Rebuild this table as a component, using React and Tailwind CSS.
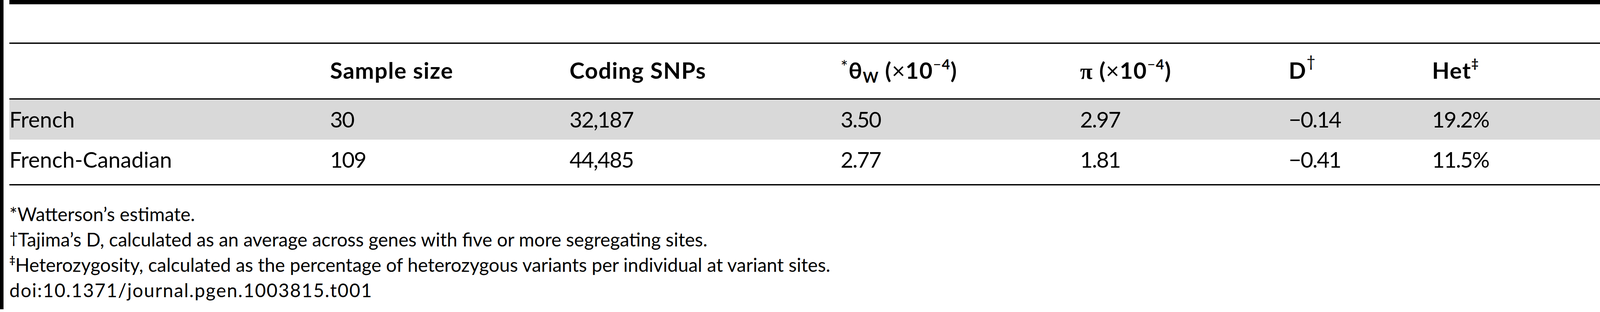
import React from 'react';

const cols = 'grid grid-cols-[821px_613px_694px_613px_534px_367px_1fr]';

const filas = [
  { pop: 'French', n: '30', snps: '32,187', theta: '3.50', pi: '2.97', d: '\u22120.14', het: '19.2%', gris: true },
  { pop: 'French-Canadian', n: '109', snps: '44,485', theta: '2.77', pi: '1.81', d: '\u22120.41', het: '11.5%', gris: false }
];

const Regla = () => (
  <div>
    <div className="h-[3px] bg-black" />
    <div className="h-px bg-[#8a8a8a]" />
  </div>
);

const App = () => {
  return (
    <div className="w-[4113px] h-[800px] bg-white flex text-black font-['Lato',sans-serif] overflow-hidden">
      <div className="w-[9px] h-[793px] bg-black shrink-0" />
      <div className="ml-[15px] flex-1 flex flex-col">
        <div className="h-[11px] bg-black" />
        <div className="h-[98px]" />
        <Regla />

        {/* cabecera */}
        <div className={`${cols} h-[139px] pt-[32px] text-[58px] leading-[70px] font-bold tracking-[1.5px]`}>
          <div />
          <div>Sample size</div>
          <div>Coding SNPs</div>
          <div className="whitespace-nowrap">
            <sup className="text-[44px] font-normal top-[-15px]">*</sup>
            <span>θ</span>
            <sub className="text-[38px] bottom-[-10px]">W</sub>
            <span> (</span>
            <span className="font-normal">×</span>
            <span>10</span>
            <sup className="text-[36px] top-[-24px]">
              <span className="font-normal">−</span>4
            </sup>
            <span>)</span>
          </div>
          <div className="whitespace-nowrap">
            <span className="font-['Liberation_Serif',serif]">π</span>
            <span> (</span>
            <span className="font-normal">×</span>
            <span>10</span>
            <sup className="text-[36px] top-[-24px]">
              <span className="font-normal">−</span>4
            </sup>
            <span>)</span>
          </div>
          <div>
            D<sup className="text-[40px] font-normal top-[-30px]">†</sup>
          </div>
          <div>
            Het<sup className="text-[32px] top-[-28px]">‡</sup>
          </div>
        </div>

        <Regla />

        {filas.map(f => (
          <div
            key={f.pop}
            className={`${cols} text-[56px] leading-[67px] ${f.gris ? 'h-[102px] pt-[16px] bg-[#d9d9d9]' : 'h-[114px] pt-[17px]'}`}
          >
            <div>{f.pop}</div>
            <div className="tracking-[-2px]">{f.n}</div>
            <div className="tracking-[-2px]">{f.snps}</div>
            <div className="tracking-[-2px]">{f.theta}</div>
            <div className="tracking-[-2px]">{f.pi}</div>
            <div className="tracking-[-2px]">{f.d}</div>
            <div className="tracking-[-2px]">{f.het}</div>
          </div>
        ))}

        <Regla />

        {/* notas */}
        <div className="mt-[40px] text-[48px] leading-[65px]">
          <p>*Watterson’s estimate.</p>
          <p><sup className="text-[38px] top-[-8px]">†</sup>Tajima’s D, calculated as an average across genes with five or more segregating sites.</p>
          <p><sup className="text-[26px] font-bold top-[-21px]">‡</sup>Heterozygosity, calculated as the percentage of heterozygous variants per individual at variant sites.</p>
          <p className="tracking-[2px]">doi:10.1371/journal.pgen.1003815.t001</p>
        </div>
      </div>
    </div>
  );
};

export default App;
